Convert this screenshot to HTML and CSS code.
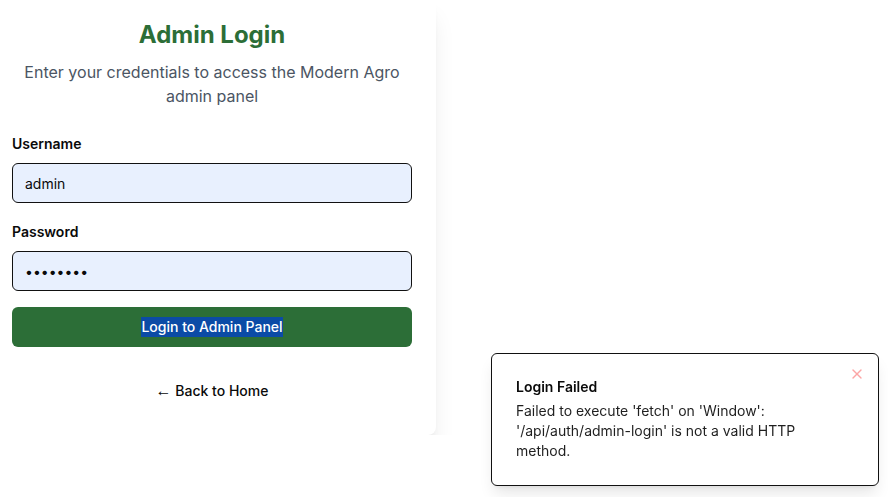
FILE: index.html
```html
<!DOCTYPE html>
<html lang="en">
<head>
<meta charset="utf-8">
<title>Admin Login</title>
<link rel="stylesheet" href="styles.css">
</head>
<body>
<main class="page">
  <section class="card">
    <header class="card-header">
      <h1 class="title">Admin Login</h1>
      <p class="subtitle">Enter your credentials to access the Modern Agro admin panel</p>
    </header>
    <form class="form">
      <div class="field">
        <label class="label" for="username">Username</label>
        <input class="input" id="username" type="text" value="admin">
      </div>
      <div class="field">
        <label class="label" for="password">Password</label>
        <input class="input input-password" id="password" type="password" value="admin123">
      </div>
      <button class="btn" type="button"><span class="selected">Login to Admin Panel</span></button>
    </form>
    <div class="back-row">
      <a class="back-link" href="#"><span class="arrow">←</span> Back to Home</a>
    </div>
  </section>
</main>

<div class="toast" role="alert">
  <div class="toast-title">Login Failed</div>
  <div class="toast-desc">Failed to execute 'fetch' on 'Window': '/api/auth/admin-login' is not a valid HTTP method.</div>
  <button class="toast-close" type="button" aria-label="Close">
    <svg width="16" height="16" viewBox="0 0 24 24" fill="none" stroke="currentColor" stroke-width="2" stroke-linecap="round" stroke-linejoin="round"><path d="M18 6 6 18"/><path d="m6 6 12 12"/></svg>
  </button>
</div>
</body>
</html>
```

FILE: styles.css
```css
* { box-sizing: border-box; }

html, body {
  margin: 0;
  padding: 0;
  background: #ffffff;
  font-family: Inter, "Noto Sans", sans-serif;
  color: #0a0a0a;
  overflow: hidden;
}

.page {
  display: flex;
  align-items: flex-start;
}

.card {
  width: 448px;
  margin-top: -5px;
  margin-left: -12px;
  padding: 24px 24px 34px;
  background: #fff;
  border-radius: 8px;
  box-shadow: 0 20px 25px -5px rgba(0,0,0,0.1), 0 8px 10px -6px rgba(0,0,0,0.1);
}

.card-header {
  text-align: center;
  display: flex;
  flex-direction: column;
  gap: 9px;
}

.title {
  margin: 0;
  font-size: 24px;
  line-height: 32px;
  font-weight: 700;
  color: #2c6e37;
}

.subtitle {
  margin: 0;
  font-size: 16px;
  line-height: 24px;
  color: #4b5563;
}

.form {
  margin-top: 26px;
  display: flex;
  flex-direction: column;
}

.field {
  display: flex;
  flex-direction: column;
  gap: 9px;
  margin-bottom: 19px;
}

.field + .field { margin-bottom: 16px; }

.label {
  font-size: 14px;
  line-height: 20px;
  font-weight: 600;
  color: #0a0a0a;
}

.input {
  height: 40px;
  width: 100%;
  padding: 0 12px;
  border: 1px solid #111;
  border-radius: 6px;
  background: #e8f0fe;
  font-family: inherit;
  font-size: 14px;
  color: #0a0a0a;
  outline: none;
}

.input-password {
  font-size: 14px;
}

.btn {
  height: 40px;
  width: 100%;
  border: 0;
  border-radius: 6px;
  background: #2c6e37;
  color: #fff;
  font-family: inherit;
  font-size: 14px;
  line-height: 20px;
  font-weight: 500;
  display: flex;
  align-items: center;
  justify-content: center;
}

.selected {
  background: #0b4ba6;
  color: #fff;
}

.back-row {
  margin-top: 33px;
  text-align: center;
  line-height: 20px;
}

.back-link {
  font-size: 14px;
  font-weight: 500;
  color: #0a0a0a;
  text-decoration: none;
}

.arrow {
  font-family: "Liberation Sans", sans-serif;
  font-weight: 400;
  font-size: 16px;
  line-height: 1;
}

.toast {
  position: fixed;
  right: 9px;
  bottom: 11px;
  width: 388px;
  padding: 23px 32px 24px 24px;
  background: #fff;
  border: 1px solid #111;
  border-radius: 6px;
  box-shadow: 0 10px 15px -3px rgba(0,0,0,0.1), 0 4px 6px -4px rgba(0,0,0,0.1);
  display: flex;
  flex-direction: column;
  gap: 4px;
}

.toast-title {
  font-size: 14px;
  line-height: 20px;
  font-weight: 600;
  color: #0a0a0a;
}

.toast-desc {
  font-size: 14px;
  line-height: 20px;
  color: #1f1f1f;
}

.toast-close {
  position: absolute;
  top: 8px;
  right: 9px;
  padding: 4px;
  border: 0;
  background: transparent;
  color: #fca5a5;
  display: flex;
}
```
